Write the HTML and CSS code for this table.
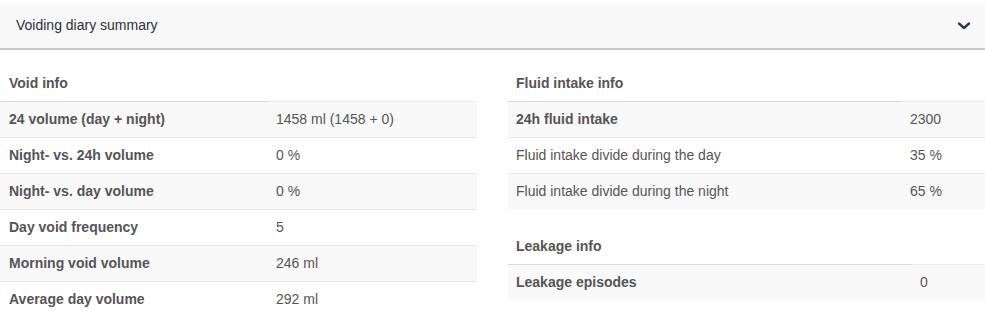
FILE: index.html
```html
<!DOCTYPE html>
<html>
<head>
<meta charset="utf-8">
<link rel="stylesheet" href="styles.css">
</head>
<body>
<div class="panel">
  <div class="panel-heading">
    <span class="panel-title">Voiding diary summary</span>
    <svg class="chevron" width="14" height="10" viewBox="0 0 14 10"><path d="M2 2.5 L7 7 L12 2.5" fill="none" stroke="#2c3e50" stroke-width="2.4" stroke-linecap="round" stroke-linejoin="round"/></svg>
  </div>
  <div class="panel-body">
    <div class="col">
      <table class="info void">
        <thead><tr><th class="lbl">Void info</th><th class="blank"></th></tr></thead>
        <tbody>
          <tr><td class="lbl b">24 volume (day + night)</td><td>1458 ml (1458 + 0)</td></tr>
          <tr><td class="lbl b">Night- vs. 24h volume</td><td>0 %</td></tr>
          <tr><td class="lbl b">Night- vs. day volume</td><td>0 %</td></tr>
          <tr><td class="lbl b">Day void frequency</td><td>5</td></tr>
          <tr><td class="lbl b">Morning void volume</td><td>246 ml</td></tr>
          <tr><td class="lbl b">Average day volume</td><td>292 ml</td></tr>
        </tbody>
      </table>
    </div>
    <div class="col">
      <table class="info fluid">
        <thead><tr><th class="lbl">Fluid intake info</th><th class="blank"></th></tr></thead>
        <tbody>
          <tr><td class="lbl b">24h fluid intake</td><td>2300</td></tr>
          <tr><td class="lbl">Fluid intake divide during the day</td><td>35 %</td></tr>
          <tr><td class="lbl">Fluid intake divide during the night</td><td>65 %</td></tr>
        </tbody>
      </table>
      <table class="info leak">
        <thead><tr><th class="lbl">Leakage info</th><th class="blank"></th></tr></thead>
        <tbody>
          <tr><td class="lbl b">Leakage episodes</td><td>0</td></tr>
        </tbody>
      </table>
    </div>
  </div>
</div>
</body>
</html>
```
FILE: styles.css
```css
html, body {
  margin: 0;
  padding: 0;
  background: #fff;
  font-family: "Liberation Sans", Arial, sans-serif;
}
.panel {
  padding-top: 3px;
}
.panel-heading {
  height: 45px;
  background: #f8f8f8;
  border-bottom: 2px solid #cacaca;
  display: flex;
  align-items: center;
  justify-content: space-between;
  padding: 0 14px 0 16px;
}
.panel-title {
  font-size: 14px;
  color: #2a323c;
  position: relative;
  top: -1px;
}
.chevron {
  display: block;
  margin-top: 1px;
}
.panel-body {
  display: grid;
  grid-template-columns: 1fr 1fr;
  column-gap: 31px;
  padding-top: 16px;
}
.info {
  width: 100%;
  border-collapse: collapse;
  font-size: 14px;
  color: #555;
  margin-bottom: 20px;
}
.info th, .info td {
  padding: 8px 8px 8px 9px;
  line-height: 19px;
  height: 19px;
  text-align: left;
  vertical-align: middle;
}
.info th {
  font-weight: bold;
  border-bottom: 1px solid #d9d9d9;
}
.info th.blank {
  border-bottom-color: #ececec;
}
.info td {
  border-top: 1px solid #e6e6e6;
}
.info tbody tr:first-child td {
  border-top: none;
}
.info tbody tr:nth-child(odd) td {
  background: #f9f9f9;
}
.info td.b {
  font-weight: bold;
}
.fluid th, .fluid td, .leak th, .leak td {
  padding-left: 8px;
}
.void .lbl { width: 250px; }
.fluid .lbl { width: 378px; }
.leak .lbl { width: 388px; }
```
